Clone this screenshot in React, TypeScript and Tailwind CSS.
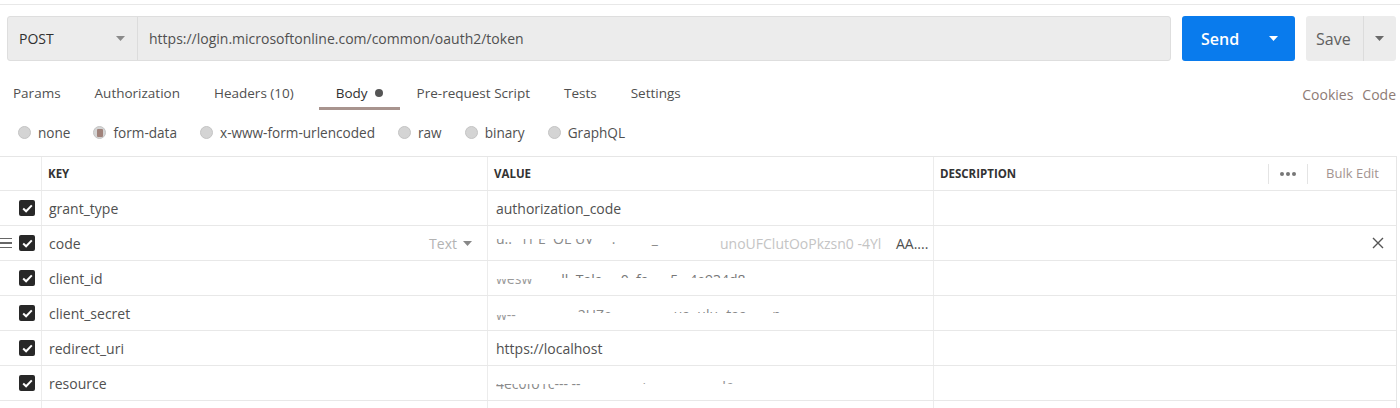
import React from 'react'

// small down-pointing caret
function Caret({ className = '' }: { className?: string }) {
	return (
		<svg width="9" height="5" viewBox="0 0 9 5" className={className}>
			<path d="M0 0 L9 0 L4.5 5 Z" fill="currentColor" />
		</svg>
	)
}

function Check() {
	return (
		<div className="w-[16px] h-[16px] rounded-[2px] bg-[#282828] flex items-center justify-center">
			<svg width="11" height="9" viewBox="0 0 11 9">
				<path d="M1.2 4.6 L4.1 7.3 L9.8 1.4" stroke="#fff" strokeWidth="2" fill="none" />
			</svg>
		</div>
	)
}

// text with only one half of its glyphs visible (the redacted values)
function Cut({ text, part, className = '' }: { text: string; part: 'top' | 'bottom'; className?: string }) {
	return (
		<span className={`inline-block h-[8px] overflow-hidden align-middle whitespace-pre ${className}`}>
			<span className={`block leading-[18px] ${part == 'bottom' ? '-mt-[9px]' : 'mt-[1px]'}`}>{text}</span>
		</span>
	)
}

const tabs = ['Params', 'Authorization', 'Headers (10)', 'Body', 'Pre-request Script', 'Tests', 'Settings']
const radios = ['none', 'form-data', 'x-www-form-urlencoded', 'raw', 'binary', 'GraphQL']

type Row = { key: string; value: React.ReactNode; hover?: boolean }

const rows: Row[] = [
	{ key: 'grant_type', value: <span>authorization_code</span> },
	{
		key: 'code',
		hover: true,
		value: (
			<span className="flex items-center whitespace-pre">
				<Cut text="u..   ı1 E  OL UV     .          _   " part="bottom" className="text-[#8a8a8a] w-[224px]" />
				<span className="text-[#c4c4c4]">unoUFClutOoPkzsn0 -4Yl    </span>
				<span>AA....</span>
			</span>
		),
	},
	{
		key: 'client_id',
		value: (
			<span className="flex items-center whitespace-pre">
				<Cut text="wesw  " part="bottom" className="text-[#9a9a9a] mt-[9px]" />
				<Cut text="      ll  Tala     0  fa      5   4e934d8" part="top" className="text-[#777] -mt-[9px]" />
			</span>
		),
	},
	{
		key: 'client_secret',
		value: (
			<span className="flex items-center whitespace-pre">
				<Cut text="w--               " part="bottom" className="text-[#9a9a9a] mt-[11px]" />
				<Cut text="  2UZe        .       .ua  ulu-.taa    .  p" part="top" className="text-[#888] -mt-[9px]" />
			</span>
		),
	},
	{ key: 'redirect_uri', value: <span>https://localhost</span> },
	{
		key: 'resource',
		value: (
			<span className="flex items-center whitespace-pre">
				<Cut text="4ec0fo1c--- --" part="bottom" className="text-[#8a8a8a] mt-[9px]" />
				<Cut text="                 ı        .            !c" part="top" className="text-[#999] -mt-[7px]" />
			</span>
		),
	},
]

export default function App() {
	return (
		<div className="w-[1400px] h-[408px] bg-white overflow-hidden font-['Open_Sans',sans-serif] text-[#505050]">
			<div className="h-[4px]" />
			<div className="h-px bg-[#e8e8e8]" />

			{/* request bar */}
			<div className="flex flex-row pl-[7px] pr-[4px] mt-[11px] h-[45px]">
				<div className="flex-1 flex flex-row bg-[#ececec] border border-[#dedede] rounded-[3px]">
					<div className="w-[130px] flex items-center justify-between pl-[11px] pr-[12px] border-r border-[#dcdcdc] text-[14px] text-[#303030]">
						<span>POST</span>
						<Caret className="text-[#8a8a8a]" />
					</div>
					<div className="flex items-center pl-[11px] text-[14px]">
						https://login.microsoftonline.com/common/oauth2/token
					</div>
				</div>
				<button className="ml-[11px] w-[113px] bg-[#097bed] rounded-[3px] text-white flex items-center pl-[19px] pr-[17px] justify-between">
					<span className="text-[16px] font-semibold">Send</span>
					<Caret className="text-white" />
				</button>
				<button className="ml-[11px] w-[90px] bg-[#ececec] rounded-[3px] flex flex-row items-stretch">
					<span className="flex items-center pl-[10px] pr-[12px] text-[16px] text-[#606060] border-r border-[#dcdcdc]">Save</span>
					<span className="flex-1 flex items-center justify-center">
						<Caret className="text-[#6a6a6a]" />
					</span>
				</button>
			</div>

			{/* tabs */}
			<div className="flex flex-row justify-between mt-[18px] h-[31px]">
				<div className="flex flex-row -ml-[4px]">
					{tabs.map(t => (
						<div
							key={t}
							className={`pl-[17px] flex items-center border-b-[3px] text-[13.5px] ${t == 'Headers (10)' ? 'pr-[25px]' : 'pr-[17px]'} ${t == 'Body' ? 'border-[#a8948e] text-[#303030]' : 'border-transparent'}`}
						>
							{t}
							{t == 'Body' && <span className="ml-[7px] w-[8px] h-[8px] rounded-full bg-[#555]" />}
						</div>
					))}
				</div>
				<div className="flex flex-row items-center gap-[9px] pr-[4px] text-[14px] text-[#8e7b75]">
					<span>Cookies</span>
					<span>Code</span>
				</div>
			</div>

			{/* body modes */}
			<div className="flex flex-row items-center pl-[18px] mt-[7px] h-[32px] gap-[23px] text-[13.6px]">
				{radios.map(r => (
					<div key={r} className="flex items-center gap-[7px]">
						<span className="w-[13px] h-[13px] rounded-full bg-[#d4d4d4] border border-[#c4c4c4] flex items-center justify-center">
							{r == 'form-data' && <span className="w-[6px] h-[8px] rounded-[1px] bg-[#a0827a]" />}
						</span>
						<span>{r}</span>
					</div>
				))}
			</div>

			{/* table */}
			<div className="mt-[7px] w-[1397px] border-t border-r border-[#e6e6e6]">
				<div className="flex flex-row h-[34px] border-b border-[#e8e8e8] text-[11.5px] font-bold text-[#333]">
					<div className="w-[42px] border-r border-[#ececec]" />
					<div className="w-[446px] border-r border-[#ececec] flex items-center pl-[6px]">KEY</div>
					<div className="w-[446px] border-r border-[#ececec] flex items-center pl-[6px]">VALUE</div>
					<div className="flex-1 flex items-center pl-[6px]">
						<span className="flex-1">DESCRIPTION</span>
						<div className="flex items-center h-[20px] border-l border-r border-[#e4e4e4] px-[11px] gap-[2px]">
							<span className="w-[4px] h-[4px] rounded-full bg-[#777]" />
							<span className="w-[4px] h-[4px] rounded-full bg-[#777]" />
							<span className="w-[4px] h-[4px] rounded-full bg-[#777]" />
						</div>
						<span className="pl-[18px] pr-[17px] text-[13px] font-normal text-[#a39490]">Bulk Edit</span>
					</div>
				</div>
				{rows.map(row => (
					<div key={row.key} className="flex flex-row h-[35px] border-b border-[#e8e8e8] text-[14px]">
						<div className="w-[42px] border-r border-[#ececec] flex items-center pr-[6px] justify-end">
							{row.hover && (
								<div className="mr-[7px] flex flex-col gap-[3px]">
									<span className="block w-[12px] h-[1.5px] bg-[#666]" />
									<span className="block w-[12px] h-[1.5px] bg-[#666]" />
									<span className="block w-[12px] h-[1.5px] bg-[#666]" />
								</div>
							)}
							<Check />
						</div>
						<div className="w-[446px] border-r border-[#ececec] flex items-center pl-[7px] pr-[15px]">
							<span className="flex-1">{row.key}</span>
							{row.hover && (
								<span className="flex items-center gap-[6px] text-[#b3b3b3]">
									Text
									<Caret className="text-[#888]" />
								</span>
							)}
						</div>
						<div className="w-[446px] border-r border-[#ececec] flex items-center pl-[8px] overflow-hidden">
							{row.value}
						</div>
						<div className="flex-1 flex items-center justify-end pr-[12px]">
							{row.hover && (
								<svg width="12" height="12" viewBox="0 0 12 12">
									<path d="M1 1 L11 11 M11 1 L1 11" stroke="#555" strokeWidth="1.4" />
								</svg>
							)}
						</div>
					</div>
				))}
				<div className="flex flex-row h-[35px]">
					<div className="w-[42px] border-r border-[#ececec]" />
					<div className="w-[446px] border-r border-[#ececec]" />
					<div className="w-[446px] border-r border-[#ececec]" />
				</div>
			</div>
		</div>
	)
}
